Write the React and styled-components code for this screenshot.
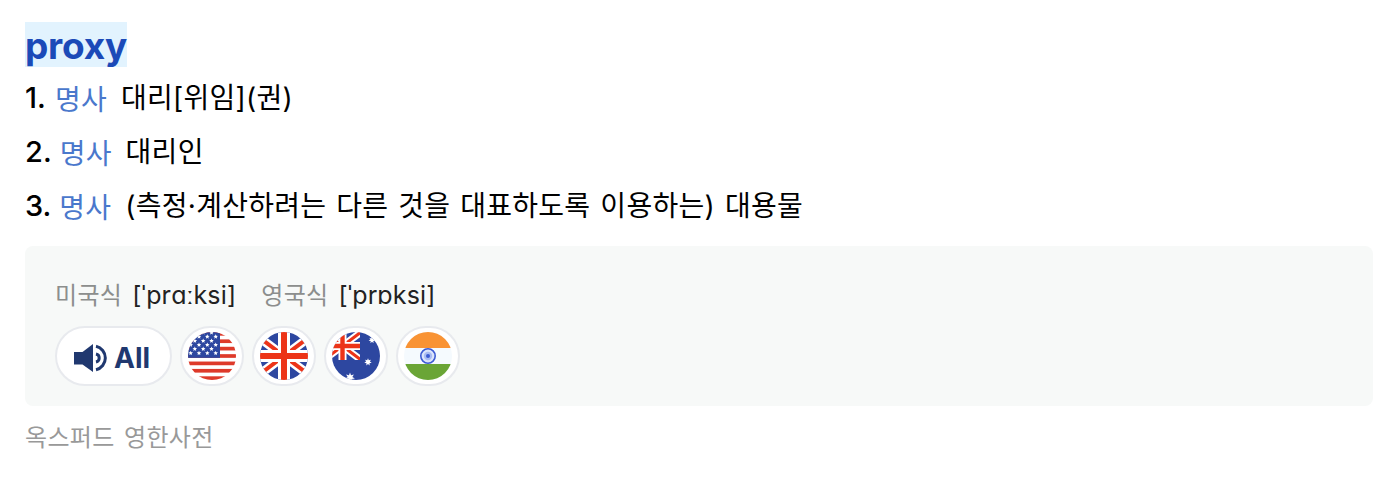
import React from "react";
import styled, { createGlobalStyle } from "styled-components";

const GlobalStyle = createGlobalStyle`
  * {
    box-sizing: border-box;
  }
  body {
    margin: 0;
    background: #ffffff;
    font-family: Inter, "Noto Sans CJK KR", sans-serif;
  }
`;

const Page = styled.main`
  display: flex;
  flex-direction: column;
  align-items: flex-start;
  padding: 22px 21px 0 25px;
`;

const Word = styled.h1`
  margin: 0;
  height: 45px;
  width: 102px;
  font-size: 37px;
  line-height: 48px;
  font-weight: 700;
  letter-spacing: -0.25px;
  color: #1b4ab8;
  background: #e2f3fe;
  white-space: nowrap;
`;

const Meanings = styled.ol`
  list-style: none;
  margin: 3px 0 0;
  padding: 0;
`;

const Meaning = styled.li`
  display: flex;
  align-items: center;
  height: 54px;
  white-space: nowrap;
`;

const Num = styled.span`
  min-width: 22px;
  font-size: 29px;
  font-weight: 500;
  color: #000000;
`;

const PartOfSpeech = styled.span`
  margin: 1px 14px 0 8px;
  font-family: "Noto Sans CJK KR", sans-serif;
  font-size: 28px;
  line-height: 40px;
  letter-spacing: 0.2px;
  color: #4a78cc;
`;

const Text = styled.span`
  margin-top: 2px;
  font-family: Inter, "Noto Sans CJK KR", sans-serif;
  font-size: 28px;
  line-height: 40px;
  letter-spacing: 0.27px;
  word-spacing: 1.8px;
  color: #000000;
`;

const Panel = styled.section`
  align-self: stretch;
  height: 160px;
  margin-top: 14px;
  padding: 32px 30px 0;
  border-radius: 8px;
  background: #f7f9f8;
`;

const Pronunciations = styled.div`
  display: flex;
  gap: 25px;
  height: 34px;
`;

const Pronunciation = styled.div`
  display: flex;
  align-items: center;
  gap: 10px;
  white-space: nowrap;
`;

const Region = styled.span`
  margin-bottom: 2px;
  font-family: "Noto Sans CJK KR", sans-serif;
  font-size: 24px;
  line-height: 34px;
  letter-spacing: 0.35px;
  color: #8c8e8d;
`;

const Ipa = styled.span`
  font-size: 25px;
  line-height: 34px;
  letter-spacing: 0.15px;
  color: #222222;
`;

const Buttons = styled.div`
  display: flex;
  gap: 8px;
  margin-top: 14px;
`;

const PillButton = styled.button`
  display: flex;
  align-items: center;
  justify-content: center;
  width: ${(p) => p.$width}px;
  height: 60px;
  padding: 0;
  border: 2px solid #e8eaee;
  border-radius: 30px;
  background: #ffffff;
  color: #20386f;
  font-family: Inter, sans-serif;
  font-size: 28px;
  font-weight: 700;
`;

const AllButton = styled(PillButton)`
  justify-content: flex-start;
  gap: 7px;
  padding: 4px 0 0 17px;
`;

const Flag = styled.svg`
  display: block;
  width: 48px;
  height: 48px;
  border-radius: 50%;
`;

const Source = styled.footer`
  margin-top: 13px;
  font-family: "Noto Sans CJK KR", sans-serif;
  font-size: 24px;
  line-height: 34px;
  letter-spacing: 0.35px;
  word-spacing: 3.5px;
  color: #999999;
`;

const Speaker = () => (
  <svg width="33" height="30" viewBox="0 0 33 30" fill="none">
    <path d="M0 9h8.500L19 1v28L8.500 21.500H0z" fill="#20386f" />
    <path d="M22 11a4.100 4.100 0 0 1 0 8" stroke="#20386f" strokeWidth="3" />
    <path d="M22 3.300a12 12 0 0 1 0 23.400" stroke="#20386f" strokeWidth="3" />
  </svg>
);

const starPoints = (cx, cy, r, inner, tips) =>
  Array.from({ length: tips * 2 }, (_, i) => {
    const a = (Math.PI * i) / tips - Math.PI / 2;
    const d = i % 2 ? inner : r;
    return `${(cx + d * Math.cos(a)).toFixed(2)},${(cy + d * Math.sin(a)).toFixed(2)}`;
  }).join(" ");

const UsFlag = () => (
  <Flag viewBox="0 0 48 48">
    <rect width="48" height="48" fill="#fff" />
    {[0, 2, 4, 6, 8, 10, 12].map((i) => (
      <rect key={i} y={(i * 48) / 13} width="48" height={48 / 13} fill="#de3a2a" />
    ))}
    <rect width="32" height="25.850" fill="#2d47a0" />
    {[0.6, 4.7, 8.8, 12.9, 17, 21.1].map((y, row) =>
      (row % 2 ? [2.7, 11, 19.3, 27.7] : [6.8, 15.2, 23.5]).map((x) => (
        <polygon key={`${x}-${y}`} points={starPoints(x, y, 2.4, 1.1, 5)} fill="#fff" />
      ))
    )}
  </Flag>
);

const UkFlag = () => (
  <Flag viewBox="0 0 48 48">
    <rect width="48" height="48" fill="#2d47a0" />
    <path d="M-8 0L56 48M56 0L-8 48" stroke="#fff" strokeWidth="9" />
    <path d="M-8 0L56 48M56 0L-8 48" stroke="#ec3418" strokeWidth="4" />
    <path d="M24 0v48M0 24h48" stroke="#fff" strokeWidth="12" />
    <path d="M24 0v48M0 24h48" stroke="#ec3418" strokeWidth="6" />
  </Flag>
);

const AuFlag = () => (
  <Flag viewBox="0 0 48 48">
    <rect width="48" height="48" fill="#2d47a0" />
    <svg x="0" y="0" width="28" height="28" viewBox="0 0 28 28">
      <path d="M-8 0L29 28M29 0L-8 28" stroke="#fff" strokeWidth="7" />
      <path d="M-8 0L29 28M29 0L-8 28" stroke="#ec3418" strokeWidth="3" />
      <path d="M10.500 0v28M0 14h28" stroke="#fff" strokeWidth="8" />
      <path d="M10.500 0v28M0 14h28" stroke="#ec3418" strokeWidth="4.400" />
    </svg>
    <polygon points={starPoints(18, 45.5, 5, 2.4, 7)} fill="#fff" />
    <polygon points={starPoints(36, 30, 3.8, 1.9, 7)} fill="#fff" />
    <polygon points={starPoints(40, 8, 3.5, 1.7, 7)} fill="#fff" />
  </Flag>
);

const InFlag = () => (
  <Flag viewBox="0 0 48 48">
    <rect width="48" height="48" fill="#f5fafe" />
    <rect width="48" height="16" fill="#f99334" />
    <rect y="32" width="48" height="16" fill="#6aa536" />
    <circle cx="24" cy="24" r="7.200" fill="#dbe4fb" stroke="#3d5bd3" strokeWidth="1.600" />
    <circle cx="24" cy="24" r="4.200" fill="#a9bbf2" />
    <circle cx="24" cy="24" r="2" fill="#3d5bd3" />
  </Flag>
);

const meanings = [
  "대리[위임](권)",
  "대리인",
  "(측정·계산하려는 다른 것을 대표하도록 이용하는) 대용물",
];

const pronunciations = [
  { region: "미국식", ipa: "[ˈprɑːksi]" },
  { region: "영국식", ipa: "[ˈprɒksi]" },
];

const flags = [UsFlag, UkFlag, AuFlag, InFlag];

const App = () => {
  return (
    <>
      <GlobalStyle />
      <Page>
        <Word>proxy</Word>
        <Meanings>
          {meanings.map((text, index) => (
            <Meaning key={text}>
              <Num>{index + 1}.</Num>
              <PartOfSpeech>명사</PartOfSpeech>
              <Text>{text}</Text>
            </Meaning>
          ))}
        </Meanings>
        <Panel>
          <Pronunciations>
            {pronunciations.map((item) => (
              <Pronunciation key={item.region}>
                <Region>{item.region}</Region>
                <Ipa>{item.ipa}</Ipa>
              </Pronunciation>
            ))}
          </Pronunciations>
          <Buttons>
            <AllButton $width={117}>
              <Speaker />
              All
            </AllButton>
            {flags.map((Icon, index) => (
              <PillButton key={index} $width={64}>
                <Icon />
              </PillButton>
            ))}
          </Buttons>
        </Panel>
        <Source>옥스퍼드 영한사전</Source>
      </Page>
    </>
  );
};

export default App;
